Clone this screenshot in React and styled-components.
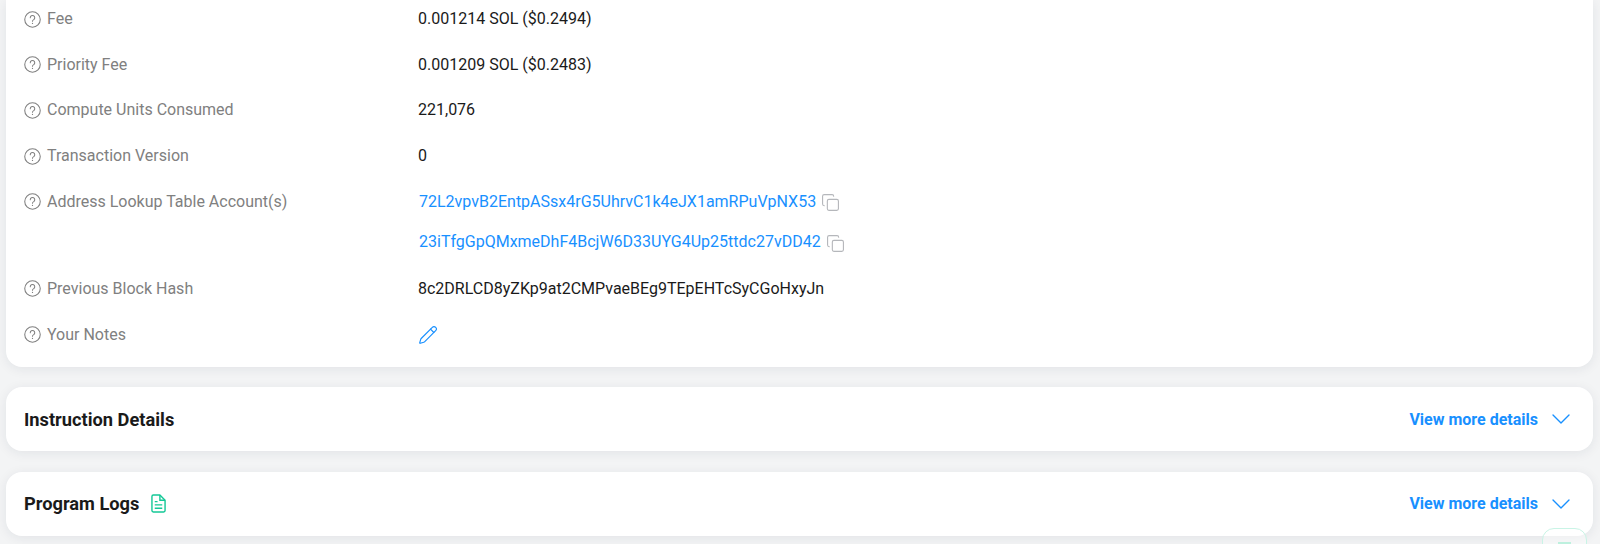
import styled, { createGlobalStyle } from 'styled-components';
import { ChevronDown, Copy, Pencil } from 'lucide-react';

const GlobalStyle = createGlobalStyle`
  html, body {
    margin: 0;
    height: 544px;
    overflow: hidden;
    background: #f3f4f5;
    font-family: Roboto, "Liberation Sans", sans-serif;
  }
`;

const rows = [
  { label: 'Fee', value: '0.001214 SOL ($0.2494)' },
  { label: 'Priority Fee', value: '0.001209 SOL ($0.2483)' },
  { label: 'Compute Units Consumed', value: '221,076' },
  { label: 'Transaction Version', value: '0' },
  {
    label: 'Address Lookup Table Account(s)',
    links: ['72L2vpvB2EntpASsx4rG5UhrvC1k4eJX1amRPuVpNX53', '23iTfgGpQMxmeDhF4BcjW6D33UYG4Up25ttdc27vDD42'],
  },
  { label: 'Previous Block Hash', value: '8c2DRLCD8yZKp9at2CMPvaeBEg9TEpEHTcSyCGoHxyJn' },
  { label: 'Your Notes', editable: true },
];

const HelpIcon = () => (
  <svg width="17" height="17" viewBox="0 0 16 16" fill="none" stroke="#808080" strokeWidth="1">
    <circle cx="8" cy="8" r="7.3" />
    <path d="M5.900 6.300a2.100 2.100 0 1 1 3.200 1.800c-.7.4-1.100.8-1.100 1.600" strokeLinecap="round" />
    <circle cx="8" cy="11.700" r=".6" fill="#808080" stroke="none" />
  </svg>
);

const LogIcon = () => (
  <svg width="15" height="19" viewBox="0 0 16 20" fill="none" stroke="#14c897" strokeWidth="1.500">
    <path d="M2.500 1h7l5.500 5.500v11a1.500 1.500 0 0 1-1.500 1.500h-11A1.500 1.500 0 0 1 1 17.500v-15A1.500 1.500 0 0 1 2.500 1z" strokeLinejoin="round" />
    <path d="M9.500 1v5.500H15M4 8h3M4 11.500h8M4 15h8" />
  </svg>
);

const App = () => (
  <Page>
    <GlobalStyle />
    <DetailsCard>
      {rows.map((row) => (
        <Row key={row.label}>
          <Label>
            <HelpIcon />
            {row.label}
          </Label>
          {row.value && <Value>{row.value}</Value>}
          {row.links && (
            <LinkList>
              {row.links.map((link) => (
                <LinkRow key={link}>
                  <AddressLink>{link}</AddressLink>
                  <CopyIcon size={19} strokeWidth={1.4} />
                </LinkRow>
              ))}
            </LinkList>
          )}
          {row.editable && (
            <NotesButton>
              <Pencil size={20} strokeWidth={1.4} />
            </NotesButton>
          )}
        </Row>
      ))}
    </DetailsCard>
    <SectionCard>
      <SectionTitle>Instruction Details</SectionTitle>
      <MoreLink>
        View more details
        <ChevronDown size={32} strokeWidth={1} />
      </MoreLink>
    </SectionCard>
    <SectionCard>
      <SectionTitle>
        Program Logs
        <LogIcon />
      </SectionTitle>
      <MoreLink>
        View more details
        <ChevronDown size={32} strokeWidth={1} />
      </MoreLink>
    </SectionCard>
    <FloatingButton>
      <FloatingBar />
    </FloatingButton>
  </Page>
);

const Page = styled.div`
  position: relative;
  height: 544px;
  padding: 0 7px 0 6px;
  box-sizing: border-box;
  display: flex;
  flex-direction: column;
  gap: 20.300px;
  overflow: hidden;
`;

const DetailsCard = styled.section`
  background: #fff;
  border-radius: 0 0 16px 16px;
  height: 367px;
  flex-shrink: 0;
  box-sizing: border-box;
  padding: 7px 18px 0;
  box-shadow: 0 2px 12px rgba(30, 40, 60, 0.08);
`;

const Row = styled.div`
  display: flex;
  align-items: flex-start;
  margin-bottom: 21.700px;
  line-height: 24px;
  font-size: 16px;
`;

const Label = styled.div`
  width: 394px;
  flex-shrink: 0;
  display: flex;
  align-items: center;
  gap: 6px;
  color: #808080;
`;

const Value = styled.div`
  color: #1a1a1a;
`;

const LinkList = styled.div`
  display: flex;
  flex-direction: column;
  gap: 16.400px;
  margin-left: 1px;
  padding-bottom: 1.100px;
`;

const LinkRow = styled.div`
  display: flex;
  align-items: center;
  gap: 5px;
`;

const AddressLink = styled.a`
  color: #1890ff;
`;

const CopyIcon = styled(Copy)`
  color: #b5b7bb;
  margin-top: 2px;
`;

const NotesButton = styled.div`
  color: #1890ff;
  display: flex;
  align-items: center;
  height: 24px;
`;

const SectionCard = styled.section`
  flex-shrink: 0;
  height: 64px;
  background: #fff;
  border-radius: 16px;
  display: flex;
  align-items: center;
  justify-content: space-between;
  padding: 0 16px 0 18px;
  box-shadow: 0 2px 12px rgba(30, 40, 60, 0.08);
`;

const SectionTitle = styled.h3`
  margin: 0;
  display: flex;
  align-items: center;
  gap: 12px;
  font-size: 18.250px;
  font-weight: 700;
  color: #1a1a1a;
`;

const MoreLink = styled.a`
  display: flex;
  align-items: center;
  gap: 7px;
  font-size: 16px;
  font-weight: 700;
  color: #1890ff;
`;

const FloatingButton = styled.div`
  position: absolute;
  left: 1542px;
  top: 528px;
  width: 45px;
  height: 45px;
  box-sizing: border-box;
  background: rgba(255, 255, 255, 0.4);
  border: 1px solid #c9f4e6;
  border-radius: 12px;
  display: flex;
  justify-content: center;
  padding-top: 13px;
`;

const FloatingBar = styled.div`
  width: 13px;
  height: 3px;
  background: #bdf0de;
`;

export default App;
